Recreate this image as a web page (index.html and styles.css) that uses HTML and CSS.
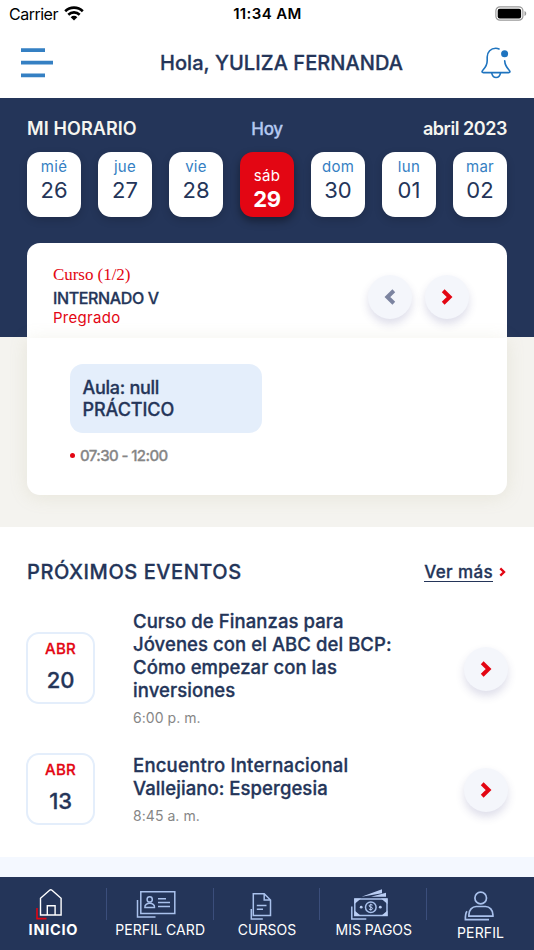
FILE: index.html
```html
<!DOCTYPE html>
<html lang="es">
<head>
<meta charset="utf-8">
<title>Inicio</title>
<link rel="stylesheet" href="styles.css">
</head>
<body>
<svg class="defs" width="0" height="0">
  <symbol id="chev" viewBox="0 0 12 16"><path d="M2.200 1.800 8.600 8l-6.400 6.200" fill="none" stroke="currentColor" stroke-width="4"/></symbol>
</svg>
<div class="app">
  <div class="status">
    <div class="carrier"><span class="carriername">Carrier</span>
      <svg width="20" height="15" viewBox="0 0 20 15"><g fill="none" stroke="#000" stroke-width="2.6"><path d="M1.200 5.200a12.600 12.600 0 0 1 17.600 0"/><path d="M4.300 8.700a8.200 8.200 0 0 1 11.400 0"/></g><path d="M10 14.600 6.700 11.200a4.700 4.700 0 0 1 6.600 0z"/></svg>
    </div>
    <div class="clock">11:34 AM</div>
    <svg class="battery" width="32" height="15" viewBox="0 0 32 15"><rect x=".9" y=".8" width="27" height="13.4" rx="4" fill="none" stroke="#999" stroke-width="1.2"/><rect x="2.7" y="2.7" width="23.400" height="9.800" rx="2" fill="#000"/><path d="M29.500 5c2.300 1 2.300 4 0 5z" fill="#999"/></svg>
  </div>
  <header class="header">
    <svg class="menu" width="32" height="30" viewBox="0 0 32 30"><path d="M0 2.200h24M0 14.700h32M0 27.400h24" stroke="#3580c3" stroke-width="3.700"/></svg>
    <h1 class="hello">Hola, YULIZA FERNANDA</h1>
    <svg class="bell" width="32" height="32" viewBox="0 0 32 32"><g fill="none" stroke="#1f74bf" stroke-width="1.600" stroke-linecap="round" stroke-linejoin="round"><path d="M18 1.900c-1-.4-2.100-.6-3.200-.6C9.800 1.300 6.200 5 6.200 10v3.500c0 3.800-1 6.200-4.200 9.500-1.700 1.800-.9 2.600.4 2.600h25.200c1.300 0 2.100-.8.4-2.600-2.800-3-4.100-5.600-4.300-9.100"/><path d="M10.700 25.800c.5 3 2.200 4.700 4.400 4.700s3.900-1.700 4.400-4.700"/></g><circle cx="23.600" cy="6.700" r="3.500" fill="#1f74bf"/></svg>
  </header>
  <section class="schedule">
    <div class="schedule-head"><span class="mine">MI HORARIO</span><span class="today">Hoy</span><span class="month">abril 2023</span></div>
    <div class="days">
      <div class="day"><span class="dow">mié</span><span class="num">26</span></div>
      <div class="day"><span class="dow">jue</span><span class="num">27</span></div>
      <div class="day"><span class="dow">vie</span><span class="num">28</span></div>
      <div class="day active"><span class="dow">sáb</span><span class="num">29</span></div>
      <div class="day"><span class="dow">dom</span><span class="num">30</span></div>
      <div class="day"><span class="dow">lun</span><span class="num">01</span></div>
      <div class="day"><span class="dow">mar</span><span class="num">02</span></div>
    </div>
    <article class="course">
      <div class="course-top">
        <div class="course-info">
          <div class="count">Curso (1/2)</div>
          <div class="name">INTERNADO V</div>
          <div class="level">Pregrado</div>
        </div>
        <div class="arrows">
          <div class="round prev"><svg width="12" height="16"><use href="#chev"/></svg></div>
          <div class="round"><svg width="12" height="16"><use href="#chev"/></svg></div>
        </div>
      </div>
      <div class="course-body">
        <div class="room"><span class="aula">Aula: null</span><span class="kind">PRÁCTICO</span></div>
        <div class="time"><i class="dot"></i><span class="hours">07:30 - 12:00</span></div>
      </div>
    </article>
  </section>
  <section class="events">
    <div class="events-head"><h2 class="etitle">PRÓXIMOS EVENTOS</h2><a class="more"><span class="moretext">Ver más</span><svg width="7" height="10"><use href="#chev"/></svg></a></div>
    <div class="event first">
      <div class="date"><span class="mon">ABR</span><span class="dnum">20</span></div>
      <div class="etext"><div>Curso de Finanzas para</div><div>Jóvenes con el ABC del BCP:</div><div>Cómo empezar con las</div><div>inversiones</div><div class="hour">6:00 p. m.</div></div>
      <div class="round"><svg width="12" height="16"><use href="#chev"/></svg></div>
    </div>
    <div class="event">
      <div class="date"><span class="mon">ABR</span><span class="dnum">13</span></div>
      <div class="etext"><div class="wide">Encuentro Internacional</div><div>Vallejiano: Espergesia</div><div class="hour">8:45 a. m.</div></div>
      <div class="round"><svg width="12" height="16"><use href="#chev"/></svg></div>
    </div>
  </section>
  <nav class="tabs">
    <div class="tab home">
      <svg width="28" height="32" viewBox="0 0 28 32"><path d="M2 20v10.600h9.500" fill="none" stroke="#e30613" stroke-width="1.600"/><path d="M5.500 27V10.300L14.600 2.300c.9-.7 1.500-.7 2.400 0l9.100 8V27zM12.300 27v-9.300h7.800V27" fill="none" stroke="#fff" stroke-width="1.400"/></svg>
      <span>INICIO</span></div>
    <div class="tab card">
      <svg width="40" height="32" viewBox="0 0.8 40 32"><g fill="none" stroke="#a9c1ec" stroke-width="1.500"><path d="M4.800 4.500h34v21.800h-34zM1.500 12.900v16.800h18"/><circle cx="13.700" cy="12.200" r="2.600"/><path d="M8.900 20.200c-.6-5.400 10.200-5.400 9.600 0zM22 11.500h8M22 15.400h12M22 19.300h12"/></g></svg>
      <span>PERFIL CARD</span></div>
    <div class="tab courses">
      <svg width="22" height="32" viewBox="0 0.5 22 32"><g fill="none" stroke="#a9c1ec" stroke-width="1.500"><path d="M3.300 6.200h10.900l6.300 6.300v15.400H3.300zM14.200 6.200v6.300h6.300M6.800 18h9.700M6.800 21.800h6.200M1.300 21.500v9.900h11.500"/></g></svg>
      <span>CURSOS</span></div>
    <div class="tab payments">
      <svg width="38" height="32" viewBox="0 0 38 32"><path d="M.8 18.500v12.500h14.500M3.800 11h32.200v16.500H3.800z" fill="none" stroke="#a9c1ec" stroke-width="1.500"/><path d="M3.500 10.500h6.500L3.500 16zM36.500 10.500H30l6.500 5.500zM3.500 28h6.500L3.500 22.500zM36.500 28H30l6.500-5.500zM10.500 8.800 31 1.300v4zM20 8.800l15-4v4z" fill="#b9cdf3"/><circle cx="19.800" cy="19.200" r="5.300" fill="none" stroke="#a9c1ec" stroke-width="1.500"/><circle cx="10.200" cy="19.200" r="1.400" fill="#b9cdf3"/><circle cx="29.300" cy="19.200" r="1.400" fill="#b9cdf3"/><path d="M21.600 17.200c-1-1-3.500-.8-3.500.7 0 1.700 3.500.8 3.500 2.500 0 1.500-2.700 1.600-3.700.6M19.800 15.700v7" fill="none" stroke="#b9cdf3"/></svg>
      <span>MIS PAGOS</span></div>
    <div class="tab profile">
      <svg width="30" height="34" viewBox="0 0 30 34"><g fill="none" stroke="#a9c1ec" stroke-width="1.700"><circle cx="16.700" cy="10" r="5.800"/><path d="M4.900 28.200v-1.500c0-4.700 3.300-8.200 7.300-8.200h9.400c4 0 7.300 3.500 7.300 8.200v1.500zM3 23.200c-1.300 1.700-1.800 4-1.600 8.500H25"/></g></svg>
      <span>PERFIL</span></div>
  </nav>
</div>
</body>
</html>
```
FILE: styles.css
```css
* { box-sizing: border-box; }
body { margin: 0; font-family: Inter, "Liberation Sans", sans-serif; color: #243559; background: #fff; }
h1, h2 { margin: 0; font-weight: 500; }
svg { display: block; flex: none; }
.defs { position: absolute; }
.app { width: 534px; height: 950px; overflow: hidden; display: flex; flex-direction: column; white-space: nowrap; }
.hello, .today, .name, .room, .hours, .etitle, .moretext, .mon, .dnum, .etext { font-weight: 500; -webkit-text-stroke: .3px currentColor; }

.status { height: 28px; display: grid; grid-template-columns: 1fr auto 1fr; align-items: center; padding: 0 7px 0 9px; color: #000; font-size: 16px; line-height: 28px; }
.carrier { display: flex; gap: 6px; align-items: center; }
.carriername { letter-spacing: -.5px; }
.carrier svg { margin-top: -2px; }
.clock { font-weight: 600; font-size: 15px; letter-spacing: .4px; margin-left: -1px; }
.battery { justify-self: end; margin-top: -1px; }

.header { height: 70px; flex: none; display: flex; justify-content: space-between; align-items: center; padding: 0 21px 1px; }
.hello { font-size: 20px; line-height: 30px; padding: 1px 0 0 29px; letter-spacing: .08px; }

.schedule { height: 429px; flex: none; padding: 20px 27px 0; background: linear-gradient(#243559 239px, #f4f3ef 239px); }
.schedule-head { display: grid; grid-template-columns: 1fr auto 1fr; font-size: 18px; line-height: 22px; font-weight: 600; color: #f6f5f0; }
.mine { letter-spacing: .1px; }
.today { color: #b5c9f1; font-size: 17px; letter-spacing: -.35px; }
.month { justify-self: end; letter-spacing: -.45px; }
.days { display: flex; justify-content: space-between; margin-top: 12px; }
.day { width: 54px; height: 65px; border-radius: 13px; background: #fff; display: flex; flex-direction: column; align-items: center; padding-top: 6px; box-shadow: 0 3px 8px rgba(0, 0, 0, .16); }
.dow { font-size: 15px; line-height: 18px; color: #3580c3; letter-spacing: .3px; }
.num { font-size: 22px; line-height: 28px; }
.active { background: #e30613; padding-top: 15px; box-shadow: 0 4px 8px rgba(0, 0, 0, .4); }
.active .dow, .active .num { color: #fff; }
.active .num { font-weight: 700; letter-spacing: -.3px; }

.course { margin-top: 26px; height: 252px; }
.course-top { height: 95px; display: flex; justify-content: space-between; padding: 21px 38px 0 26px; background: #fff; border-radius: 13px 13px 0 0; }
.count { font-family: "Liberation Serif", serif; font-size: 17px; line-height: 22px; color: #e30613; letter-spacing: -.05px; }
.name { font-size: 16px; line-height: 22px; letter-spacing: -.37px; margin-top: 1px; }
.level { font-size: 15px; line-height: 18px; color: #e30613; letter-spacing: .28px; }
.arrows { display: flex; gap: 13px; padding-top: 11px; }
.round { width: 44px; height: 44px; flex: none; border-radius: 50%; background: #f4f6fb; color: #e30613; display: flex; align-items: center; justify-content: center; box-shadow: 0 5px 9px rgba(60, 60, 130, .17); }
.round svg { margin-right: 1px; }
.prev { color: #7c84a0; }
.prev svg { transform: scaleX(-1); }
.course-body { padding: 26px 42.500px; background: #fff; height: 157px; border-radius: 0 0 13px 13px; box-shadow: 0 2px 18px rgba(170, 165, 120, .17); }
.room { width: 192px; height: 69px; border-radius: 13px; background: #e4eefb; padding: 13px; display: flex; flex-direction: column; align-items: flex-start; font-size: 18px; line-height: 22px; }
.aula { letter-spacing: -.27px; }
.kind { letter-spacing: -.05px; }
.time { display: flex; align-items: center; margin-top: 12px; line-height: 22px; font-size: 15px; color: #868686; letter-spacing: -.6px; }
.dot { width: 5px; height: 5px; border-radius: 50%; background: #e30613; margin: 0 5.500px 1px 0; }

.events { height: 330px; flex: none; padding: 31px 27px 0; }
.events-head { display: flex; justify-content: space-between; height: 28px; line-height: 28px; }
.etitle { font-size: 20px; letter-spacing: .56px; }
.more { display: flex; gap: 6px; align-items: center; font-size: 17px; height: 26px; padding-right: 1px; }
.more svg { color: #e30613; margin-top: 2px; }
.moretext { line-height: 22px; border-bottom: 1px solid #243559; height: 21px; letter-spacing: .37px; }
.event { display: grid; grid-template-columns: 69px 1fr 44px; column-gap: 38px; align-items: center; height: 121px; margin: 0 -1px; }
.first { margin-top: 22px; }
.date { height: 72px; width: 69px; border: 2px solid #e4eefb; border-radius: 13px; display: flex; flex-direction: column; align-items: center; padding-top: 4px; margin-bottom: 2px; }
.mon { color: #e30613; font-size: 15px; line-height: 22px; letter-spacing: .25px; }
.dnum { font-size: 22px; line-height: 28px; margin-top: 6px; letter-spacing: -.2px; }
.etext { font-size: 18.500px; line-height: 23.200px; letter-spacing: .07px; display: flex; flex-direction: column; align-items: flex-start; padding-top: 1px; }
.wide { letter-spacing: .22px; }
.hour { font-size: 14px; line-height: 20px; margin-top: 6px; font-weight: 400; -webkit-text-stroke: 0; color: #868686; letter-spacing: .05px; }

.tabs { height: 93px; flex: none; border-top: 20px solid #f4f8ff; background: #243559; display: flex; color: #fff; }
.tab { width: 106.800px; height: 73px; padding-top: 11px; display: flex; flex-direction: column; align-items: center; font-size: 14px; line-height: 18px; background: linear-gradient(#3b4e7b, #3b4e7b) right 11px / 1px 32px no-repeat; }
.tab span { margin-top: 1px; }
.home { font-weight: 700; font-size: 14.500px; letter-spacing: .75px; }
.home svg { margin-right: 9px; }
.card { letter-spacing: .08px; }
.card svg { margin-right: 9px; }
.courses svg { margin-right: 12px; }
.payments svg { margin-right: 8px; }
.profile { background: none; letter-spacing: .15px; }
.profile svg { margin-right: 4px; }
.profile span { margin-top: 2px; }
```
